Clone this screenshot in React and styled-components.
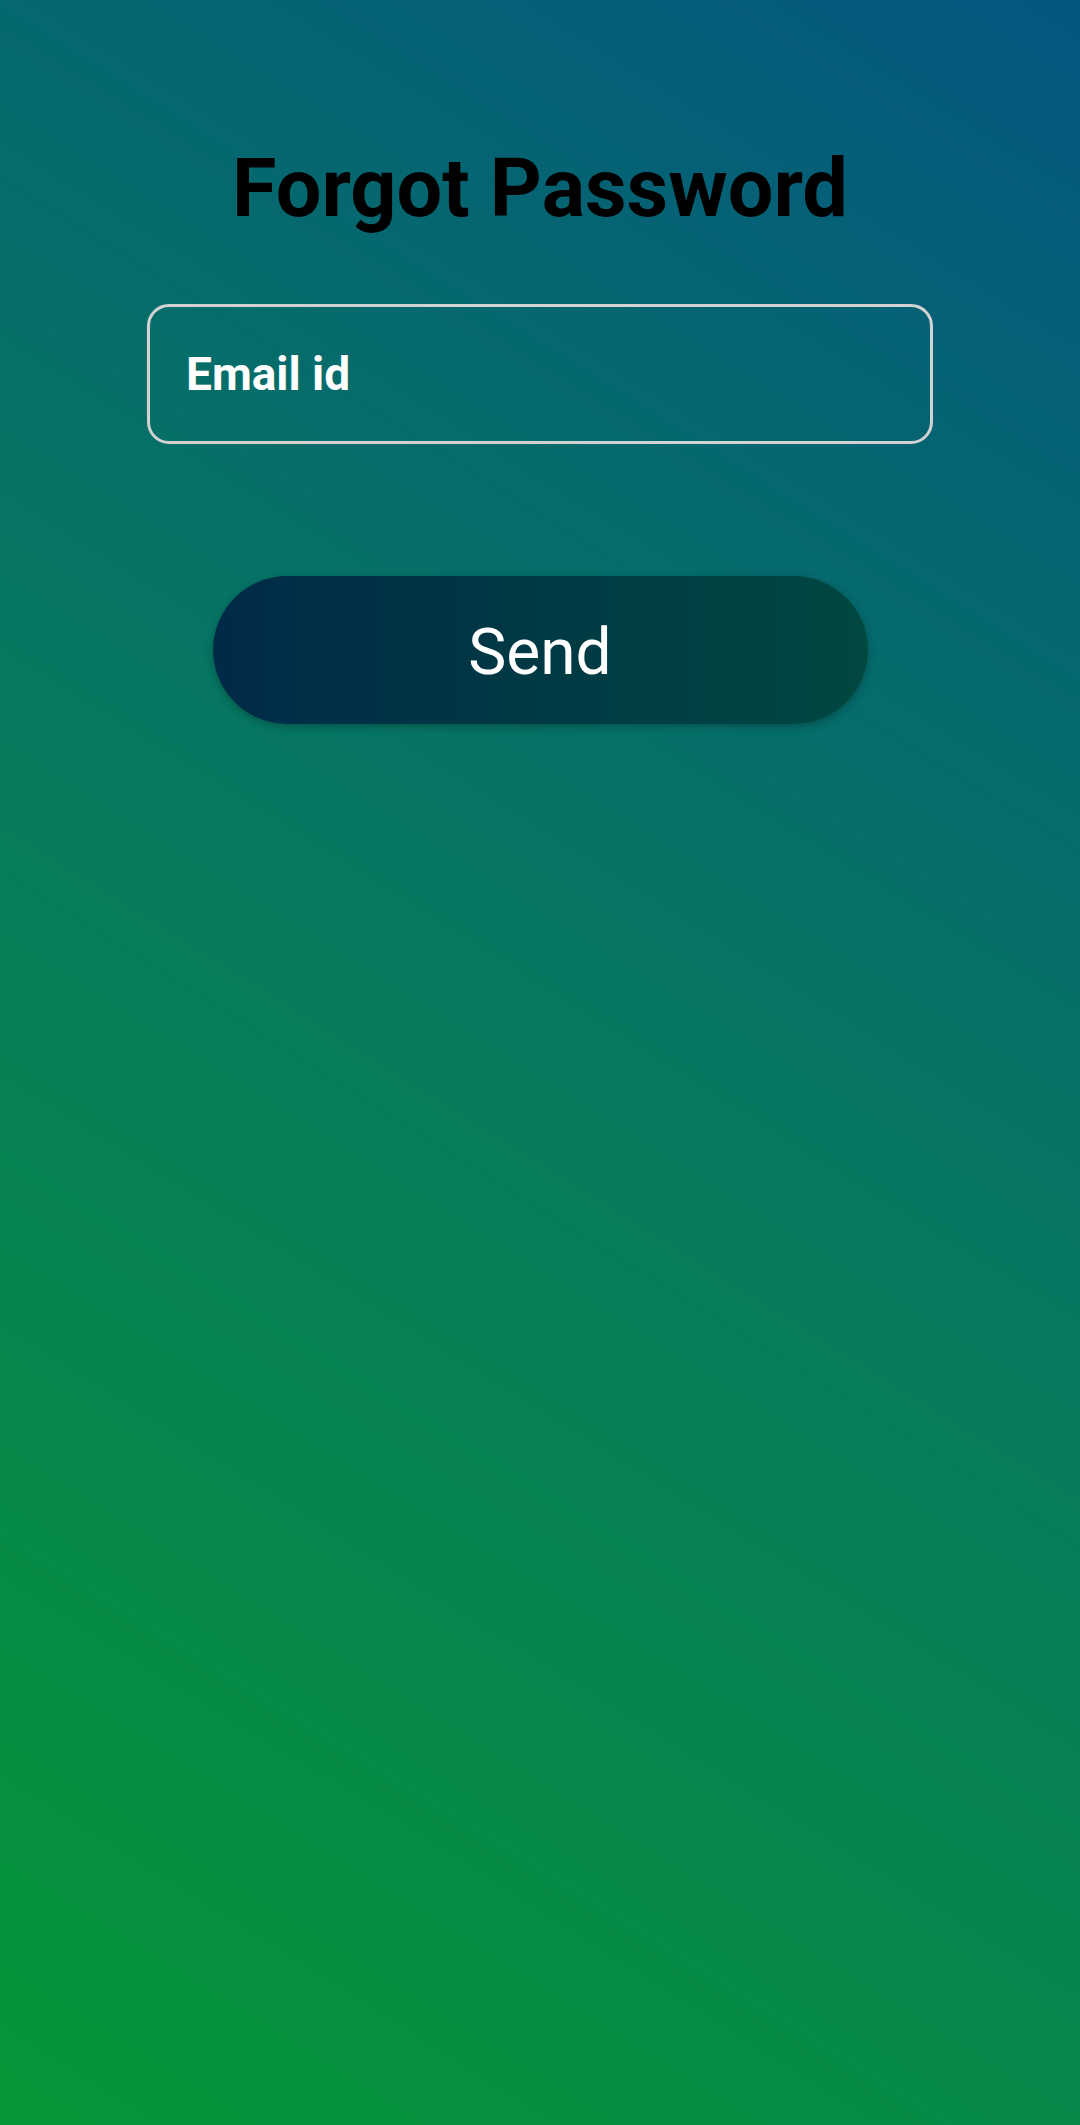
import styled, { createGlobalStyle } from 'styled-components';

const GlobalStyle = createGlobalStyle`
  html, body {
    margin: 0;
    padding: 0;
  }
  body {
    font-family: Roboto, "Liberation Sans", sans-serif;
  }
`;

const Screen = styled.div`
  min-height: 2125px;
  box-sizing: border-box;
  display: flex;
  flex-direction: column;
  align-items: center;
  padding-top: 148px;
  background: linear-gradient(32deg, #069636 0%, #067a5e 50%, #05567f 100%);
`;

const Title = styled.h1`
  margin: 0;
  font-size: 81px;
  line-height: 82px;
  font-weight: 700;
  color: #000;
  text-align: center;
`;

const EmailInput = styled.input`
  margin-top: 74px;
  width: 786px;
  height: 140px;
  box-sizing: border-box;
  padding: 0 36px;
  border: 3px solid #d2d2d2;
  border-radius: 22px;
  background: transparent;
  font-family: Roboto, "Liberation Sans", sans-serif;
  font-size: 46px;
  font-weight: 700;
  color: #fff;
  outline: none;

  &::placeholder {
    color: #fff;
    opacity: 1;
  }
`;

const SendButton = styled.button`
  margin-top: 132px;
  width: 655px;
  height: 148px;
  padding-top: 5px;
  border: none;
  border-radius: 74px;
  background: linear-gradient(to right, #002a48, #004840);
  box-shadow: 0 3px 8px rgba(0, 0, 0, 0.25);
  font-family: Roboto, "Liberation Sans", sans-serif;
  font-size: 64px;
  font-weight: 400;
  color: #fff;
  cursor: pointer;
`;

function App() {
  return (
    <>
      <GlobalStyle />
      <Screen>
        <Title>Forgot Password</Title>
        <EmailInput type="email" placeholder="Email id" />
        <SendButton>Send</SendButton>
      </Screen>
    </>
  );
}

export default App;
